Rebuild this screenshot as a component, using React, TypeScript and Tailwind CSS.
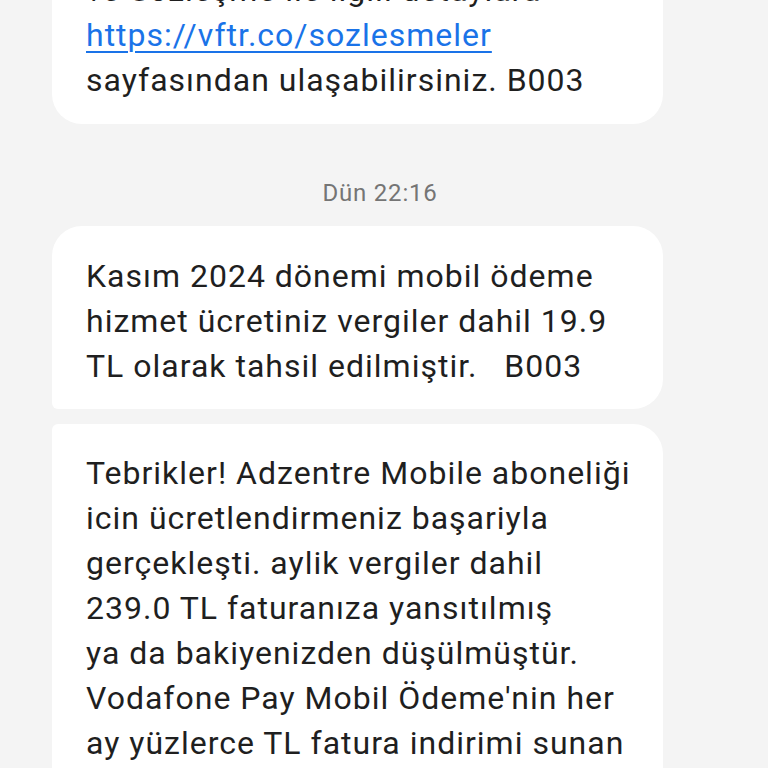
import React from 'react'

const font = { fontFamily: 'Roboto, "Noto Sans", sans-serif' }

function Lines({ lines }: { lines: React.ReactNode[] }) {
  return (
    <>
      {lines.map((l, i) => (
        <div key={i} className="whitespace-pre">
          {l}
        </div>
      ))}
    </>
  )
}

export default function App() {
  return (
    <div className="h-[768px] w-[768px] overflow-hidden bg-[#f4f4f4]" style={font}>
      <div className="-mt-[60px] flex flex-col">
        {/* Previous message (scrolled off the top) */}
        <div className="ml-[52px] w-[611px] rounded-b-[30px] rounded-t-[6px] bg-white pl-[34px] pr-4 pt-[28px] pb-[21px] text-[32px] leading-[45px] tracking-[1px] text-[#1f1f1f]">
          <Lines
            lines={[
              've Sözleşme ile ilgili detaylara',
              <a key="l" href="#" className="text-[#1a73e8] underline decoration-[2px] underline-offset-[5px]">
                https://vftr.co/sozlesmeler
              </a>,
              'sayfasından ulaşabilirsiniz. B003',
            ]}
          />
        </div>

        {/* Timestamp */}
        <div className="mt-[54px] mb-[18px] pr-[8px] text-center text-[24px] leading-[30px] tracking-[0.8px] text-[#757575]">
          Dün 22:16
        </div>

        {/* Message 1 */}
        <div className="ml-[52px] w-[611px] rounded-t-[30px] rounded-br-[30px] rounded-bl-[6px] bg-white pl-[34px] pr-4 pt-[28px] pb-[20px] text-[32px] leading-[45px] tracking-[1px] text-[#1f1f1f]">
          <Lines
            lines={[
              'Kasım 2024 dönemi mobil ödeme',
              'hizmet ücretiniz vergiler dahil 19.9',
              'TL olarak tahsil edilmiştir.   B003',
            ]}
          />
        </div>

        {/* Message 2 */}
        <div className="mt-[15px] ml-[52px] w-[611px] rounded-tl-[6px] rounded-tr-[30px] bg-white pl-[34px] pr-4 pt-[27px] pb-[21px] text-[32px] leading-[45px] tracking-[1px] text-[#1f1f1f]">
          <Lines
            lines={[
              'Tebrikler! Adzentre Mobile aboneliği',
              'icin ücretlendirmeniz başariyla',
              'gerçekleşti. aylik vergiler dahil',
              '239.0 TL faturanıza yansıtılmış',
              'ya da bakiyenizden düşülmüştür.',
              "Vodafone Pay Mobil Ödeme'nin her",
              'ay yüzlerce TL fatura indirimi sunan',
              'kampanyalarından yararlanmak için',
            ]}
          />
        </div>
      </div>
    </div>
  )
}
